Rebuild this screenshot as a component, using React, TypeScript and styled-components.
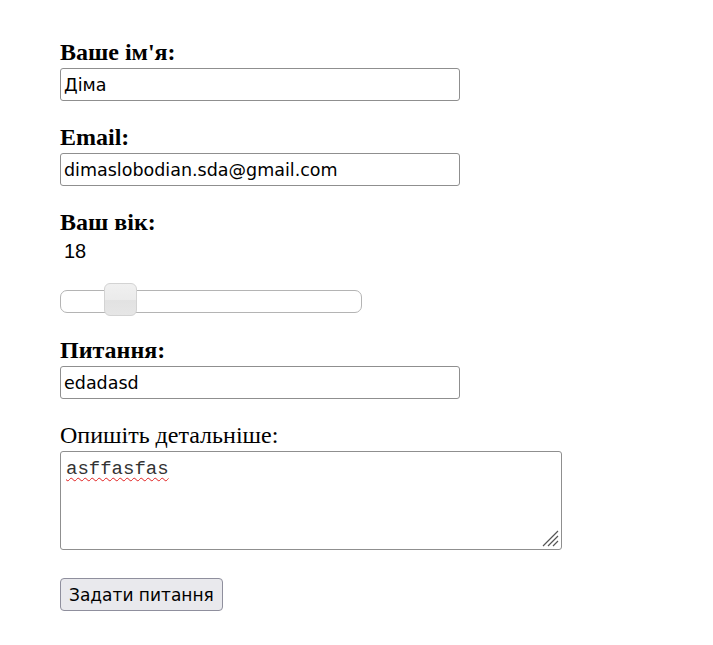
import * as React from 'react';
import styled, { createGlobalStyle } from 'styled-components';

const GlobalStyle = createGlobalStyle`
  body {
    margin: 0;
    background: #ffffff;
    font-family: "Liberation Serif", "Times New Roman", serif;
    color: #000000;
  }
`;

const StyledForm = styled.form`
  display: flex;
  flex-direction: column;
  align-items: flex-start;
  padding: 39px 0 0 60px;
`;

const StyledField = styled.div`
  display: flex;
  flex-direction: column;
  align-items: flex-start;
  margin-bottom: 23px;
`;

const StyledLabel = styled.label<{ $plain?: boolean }>`
  font-size: 24px;
  line-height: 27px;
  font-weight: ${props => (props.$plain ? 'normal' : 'bold')};
  margin-bottom: 2px;
`;

const StyledInput = styled.input`
  box-sizing: border-box;
  width: 400px;
  height: 33px;
  padding: 0 3px;
  border: 1px solid #8f8f8f;
  border-radius: 3px;
  font-family: "DejaVu Sans", Tahoma, sans-serif;
  font-size: 17.5px;
  color: #000000;
  background: #ffffff;
  outline: none;
`;

const StyledValue = styled.output`
  font-family: "Liberation Sans", Arial, sans-serif;
  font-size: 20px;
  line-height: 23px;
  padding-left: 4px;
  margin: 2px 0 20px;
`;

const StyledRange = styled.input`
  -webkit-appearance: none;
  appearance: none;
  width: 302px;
  height: 23px;
  margin: 7px 0 1px;
  background: transparent;
  overflow: visible;

  &::-webkit-slider-runnable-track {
    box-sizing: border-box;
    height: 23px;
    border: 1px solid #b4b4b4;
    border-radius: 7px;
    background: #ffffff;
  }

  &::-webkit-slider-thumb {
    -webkit-appearance: none;
    box-sizing: border-box;
    width: 33px;
    height: 33px;
    margin-top: -8px;
    border: 1px solid #d3d3d3;
    border-radius: 6px;
    background: linear-gradient(#f0f0f0 0%, #ebebeb 50%, #e2e2e2 51%, #e6e6e6 100%);
  }
`;

const StyledTextBox = styled.div`
  box-sizing: border-box;
  position: relative;
  width: 502px;
  height: 99px;
  padding: 6px 5px;
  border: 1px solid #8f8f8f;
  border-radius: 3px;
  font-family: "Liberation Mono", "Courier New", monospace;
  font-size: 19px;
  line-height: 22px;
  color: #333333;
`;

const StyledSpell = styled.span`
  text-decoration: underline wavy #e02020;
  text-underline-offset: 3px;
  text-decoration-thickness: 1px;
`;

const StyledGrip = styled.svg`
  position: absolute;
  right: 2px;
  bottom: 2px;
`;

const StyledButton = styled.button`
  box-sizing: border-box;
  height: 33px;
  padding: 0 8px;
  border: 1px solid #8f8f9d;
  border-radius: 4px;
  background: #e9e9ed;
  font-family: "DejaVu Sans", Tahoma, sans-serif;
  font-size: 17px;
  color: #000000;
  margin-top: 5px;
`;

const App = () => {
  const [age, setAge] = React.useState(18);

  return (
    <>
      <GlobalStyle />
      <StyledForm onSubmit={e => e.preventDefault()}>
        <StyledField>
          <StyledLabel htmlFor="name">Ваше ім'я:</StyledLabel>
          <StyledInput id="name" defaultValue="Діма" />
        </StyledField>
        <StyledField>
          <StyledLabel htmlFor="email">Email:</StyledLabel>
          <StyledInput id="email" defaultValue="dimaslobodian.sda@gmail.com" />
        </StyledField>
        <StyledField>
          <StyledLabel htmlFor="age">Ваш вік:</StyledLabel>
          <StyledValue>{age}</StyledValue>
          <StyledRange
            id="age"
            type="range"
            min={10}
            max={60}
            value={age}
            onChange={e => setAge(Number(e.target.value))}
          />
        </StyledField>
        <StyledField>
          <StyledLabel htmlFor="question">Питання:</StyledLabel>
          <StyledInput id="question" defaultValue="edadasd" />
        </StyledField>
        <StyledField>
          <StyledLabel $plain>Опишіть детальніше:</StyledLabel>
          <StyledTextBox>
            <StyledSpell>asffasfas</StyledSpell>
            <StyledGrip width="18" height="18" viewBox="0 0 18 18">
              <path d="M17 2 L2 17 M17 7 L7 17 M17 12 L12 17" stroke="#555" strokeWidth="1.2" />
            </StyledGrip>
          </StyledTextBox>
        </StyledField>
        <StyledButton type="submit">Задати питання</StyledButton>
      </StyledForm>
    </>
  );
};

export default App;
